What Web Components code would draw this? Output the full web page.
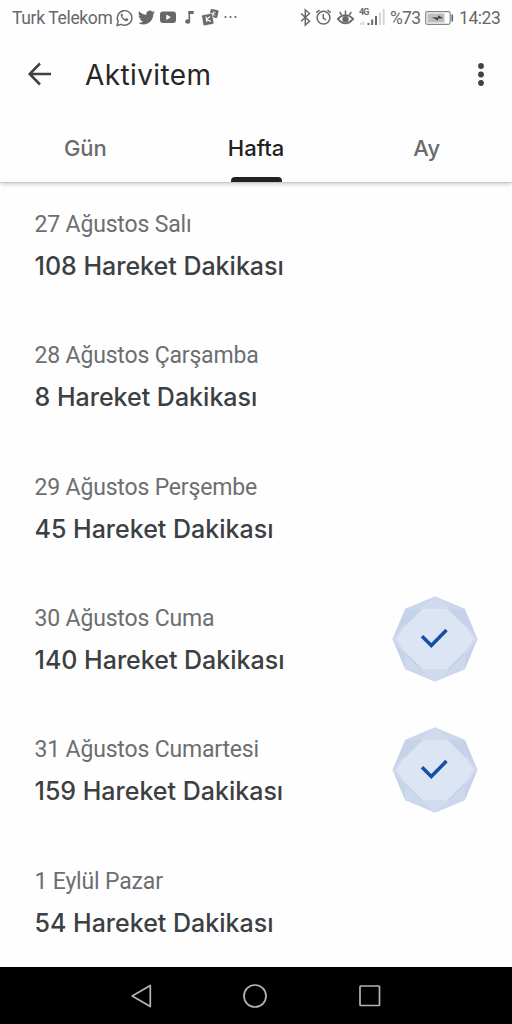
<!DOCTYPE html>
<html lang="tr">
<head>
<meta charset="utf-8">
<title>Aktivitem</title>
<style>
  html, body {
    margin: 0;
    height: 100%;
    overflow: hidden;
    background: #fefefe;
    font-family: Roboto, "Liberation Sans", sans-serif;
  }
</style>
</head>
<body>
<activity-app></activity-app>

<script>
const icons = {
  whatsapp: `<path d="M1 16.500l1.200-4.100A7.300 7.300 0 1 1 5.100 15.300z" fill="none" stroke="currentColor" stroke-width="1.400" stroke-linejoin="round"/><path d="M5.700 4.500c-.9.5-1.200 1.500-.9 2.500.8 2.500 2.600 4.300 5 5.100 1 .3 2.300-.3 2.500-1.500l-.1-.6-1.900-.9-.9 1c-1.500-.6-2.500-1.500-3.200-2.900l.8-.9-.8-1.800z" fill="currentColor"/>`,
  twitter: `<path transform="scale(.7083)" fill="currentColor" d="M23.950 4.570a10 10 0 0 1-2.820.770 4.960 4.960 0 0 0 2.160-2.720c-.95.550-2 .95-3.120 1.180a4.920 4.920 0 0 0-8.380 4.480C7.690 8.100 4.070 6.130 1.640 3.160a4.920 4.920 0 0 0 1.520 6.570 4.900 4.900 0 0 1-2.230-.610v.060c0 2.390 1.700 4.380 3.950 4.830a5 5 0 0 1-2.210.080 4.940 4.940 0 0 0 4.600 3.420A9.870 9.870 0 0 1 0 19.540a13.990 13.990 0 0 0 7.550 2.210c9.050 0 14-7.500 14-13.980v-.640a9.940 9.940 0 0 0 2.400-2.560z"/>`,
  youtube: `<rect x="0" y="2.500" width="16" height="11.500" rx="3" fill="currentColor"/><path d="M6.300 5.500v5.400l4.700-2.700z" fill="#fefefe"/>`,
  note: `<path d="M4.300 2v10" stroke="currentColor" stroke-width="1.600"/><path d="M3.500 2h5.200v3H3.500z" fill="currentColor"/><ellipse cx="2.700" cy="12.500" rx="2.500" ry="2.200" fill="currentColor"/>`,
  cards: `<g fill="currentColor"><rect x="8" y=".5" width="8" height="8" rx="1" transform="rotate(12 12 4.500)"/><rect x=".2" y="5" width="11" height="11" rx="1.500" transform="rotate(-10 6 10)" stroke="#fefefe" stroke-width=".7"/></g><g fill="none" stroke="#fefefe"><path d="M4 7.500l.8 5.500M8 7.500l-3.400 3L9 12.500" stroke-width="1.200"/><path d="M11.300 2.500l-.6 4M13.800 3l-2.800 1.700 2 2" stroke-width=".9"/></g>`,
  dots: `<g fill="currentColor"><circle cx="1.500" cy="8" r="1.100"/><circle cx="6.500" cy="8" r="1.100"/><circle cx="11.500" cy="8" r="1.100"/></g>`,
  bluetooth: `<path d="M1 4.500l8.500 7.800-4.200 3.800V.8l4.200 3.700L1 12.300" fill="none" stroke="currentColor" stroke-width="1.500"/>`,
  alarm: `<g fill="none" stroke="currentColor" stroke-width="1.500"><circle cx="7.500" cy="8.700" r="6.400"/><path d="M7.300 5v4l2.700 2M.3 3.700L3.600 1M14.700 3.700L11.400 1"/></g>`,
  eye: `<g fill="none" stroke="currentColor" stroke-width="1.700"><path d="M.8 9.900Q8.500 2.500 16.200 9.900 8.500 19 .8 9.900z"/><path d="M8.500 1.500v4M2.800 3l1.800 3M14.200 3l-1.800 3" stroke-width="1.500"/></g><circle cx="8.500" cy="10.200" r="3.200" fill="currentColor"/>`,
  signal: `<g fill="#d6d6d6"><path d="M1 13.500h1.500V16H1zM3.500 12.500H5V16H3.500zM20 3.500h2V16h-2zM23.700 0h2v16h-2z"/></g><path d="M8.500 14h2v2h-2zM12.200 10.500h2V16h-2zM16 7h2v9h-2z" fill="currentColor"/>`,
  battery: `<rect x=".7" y="2.700" width="24.500" height="12.600" rx="1.800" fill="none" stroke="#858585" stroke-width="1.200"/><rect x="2.500" y="4.500" width="17" height="9" fill="#bdbdbd"/><path d="M26.400 5.500h1.700v7h-1.700z" fill="currentColor"/><path d="M7 8.300l6 .2V6.300l5.500 2.900-5.500.6v1.900z" fill="#444"/>`,
  back: `<path d="M23 12H2M12 1.500L1.700 12 12 22.500" fill="none" stroke="currentColor" stroke-width="2.500"/>`,
  more: `<g fill="currentColor"><circle cx="4" cy="3" r="2.900"/><circle cx="4" cy="11.500" r="2.900"/><circle cx="4" cy="20" r="2.900"/></g>`,
  navBack: `<path d="M1.200 12L19.300 1.400v21.200z" fill="none" stroke="currentColor" stroke-width="1.700" stroke-linejoin="round"/>`,
  navHome: `<circle cx="12" cy="12" r="11" fill="none" stroke="currentColor" stroke-width="1.700"/>`,
  navRecent: `<rect x="1" y="1" width="19.500" height="19.500" rx=".7" fill="none" stroke="currentColor" stroke-width="1.700"/>`
};

class UiIcon extends HTMLElement {
  constructor() {
    super();
    this.attachShadow({mode: 'open'});
  }

  connectedCallback() {
    const w = this.getAttribute('w');
    const h = this.getAttribute('h') || 17;
    this.shadowRoot.innerHTML = `
      <style>
        :host { display: block; flex: none; }
        svg { display: block; overflow: visible; }
      </style>
      <svg width="${w}" height="${h}" viewBox="0 0 ${w} ${h}">${icons[this.getAttribute('name')]}</svg>
    `;
  }
}
customElements.define('ui-icon', UiIcon);

class StatusBar extends HTMLElement {
  constructor() {
    super();
    this.attachShadow({mode: 'open'}).innerHTML = `
      <style>
        :host {
          display: flex;
          justify-content: space-between;
          align-items: center;
          box-sizing: border-box;
          height: 36px;
          padding: 0 12px 1px;
          color: #686868;
          font-size: 17.500px;
          line-height: 20px;
          white-space: nowrap;
        }
        .group { display: flex; align-items: center; }
        .carrier { width: 104px; letter-spacing: -0.350px; }
        .left { gap: 5px; }
        .left .carrier { margin-right: -5px; }
        .left [name=note] { margin: 0 3px 0 4px; }
        .right { gap: 6px; }
        .network {
          position: relative;
          margin: 0 -1px 0 -1px;
        }
        .network span {
          position: absolute;
          left: 0;
          top: -1px;
          font-size: 9px;
          font-weight: 700;
          line-height: 9px;
          letter-spacing: -0.900px;
        }
        .percent { width: 30px; margin-right: -1px; letter-spacing: -0.700px; }
        .time { width: 41px; letter-spacing: -0.450px; }
      </style>
      <div class="group left">
        <span class="carrier">Turk Telekom</span>
        <ui-icon name="whatsapp" w="17"></ui-icon>
        <ui-icon name="twitter" w="17"></ui-icon>
        <ui-icon name="youtube" w="16"></ui-icon>
        <ui-icon name="note" w="9"></ui-icon>
        <ui-icon name="cards" w="17"></ui-icon>
        <ui-icon name="dots" w="13"></ui-icon>
      </div>
      <div class="group right">
        <ui-icon name="bluetooth" w="10"></ui-icon>
        <ui-icon name="alarm" w="15"></ui-icon>
        <ui-icon name="eye" w="17"></ui-icon>
        <div class="network"><ui-icon name="signal" w="26"></ui-icon><span>4G</span></div>
        <span class="percent">%73</span>
        <ui-icon name="battery" w="28"></ui-icon>
        <span class="time">14:23</span>
      </div>
    `;
  }
}
customElements.define('status-bar', StatusBar);

class AppHeader extends HTMLElement {
  constructor() {
    super();
    this.attachShadow({mode: 'open'}).innerHTML = `
      <style>
        :host {
          display: flex;
          align-items: center;
          box-sizing: border-box;
          height: 78px;
          padding: 0 27px 2px 28px;
          color: #414141;
        }
        h1 {
          flex: 1;
          margin: 2px 0 0 33px;
          color: #262626;
          font: 400 28px/36px Inter, sans-serif;
          letter-spacing: 0.400px;
        }
      </style>
      <ui-icon name="back" w="24" h="24"></ui-icon>
      <h1><slot></slot></h1>
      <ui-icon name="more" w="8" h="23"></ui-icon>
    `;
  }
}
customElements.define('app-header', AppHeader);

class TabItem extends HTMLElement {
  constructor() {
    super();
    this.attachShadow({mode: 'open'}).innerHTML = `
      <style>
        :host {
          display: flex;
          flex: 1;
          flex-direction: column;
          align-items: center;
          justify-content: space-between;
          color: #6b6b6b;
          font: 500 22px/63px Inter, sans-serif;
        }
        :host([active]) { color: #212121; }
        span { padding-top: 2.500px; height: 60.500px; }
        i { width: 51px; height: 5px; }
        :host([active]) i {
          background: #212121;
          border-radius: 4px 4px 0 0;
        }
      </style>
      <span><slot></slot></span><i></i>
    `;
  }
}
customElements.define('tab-item', TabItem);

class TabBar extends HTMLElement {
  constructor() {
    super();
    this.attachShadow({mode: 'open'}).innerHTML = `
      <style>
        :host {
          display: flex;
          height: 68px;
          border-bottom: 1px solid #c8c8c8;
          box-shadow: 0 3px 3px -1px rgba(0, 0, 0, 0.15);
        }
      </style>
      <slot></slot>
    `;
  }
}
customElements.define('tab-bar', TabBar);

class GoalBadge extends HTMLElement {
  constructor() {
    super();
    this.attachShadow({mode: 'open'}).innerHTML = `
      <style>
        :host { display: block; margin-top: -1px; }
        svg { display: block; }
      </style>
      <svg width="86" height="86" viewBox="0 0 86 86">
        <path d="M43 .5L73 13 85.500 43 73 73 43 85.500 13 73 .5 43 13 13z" fill="#c5d2e8"/>
        <path d="M43 .5L73 13H13zM43 85.500L73 73H13z" fill="#cbd7eb"/>
        <path d="M43 .5L58 13H28zM43 85.500L58 73H28zM.5 43L13 28v30zM85.500 43L73 28v30z" fill="#d0dbee"/>
        <path d="M13 58L28 73H13zM73 58L58 73h15z" fill="#cdd9ec"/>
        <path d="M30.500 13h25L73 30.500 82 43 73 55.500 55.500 73h-25L13 55.500 4 43l9-12.500z" fill="#dbe5f4"/>
        <path d="M30 40.200l9.300 9.300L54.500 34" fill="none" stroke="#174ea6" stroke-width="3.500"/>
      </svg>
    `;
  }
}
customElements.define('goal-badge', GoalBadge);

class DayRow extends HTMLElement {
  constructor() {
    super();
    this.attachShadow({mode: 'open'});
  }

  connectedCallback() {
    this.shadowRoot.innerHTML = `
      <style>
        :host {
          display: flex;
          align-items: center;
          justify-content: space-between;
          box-sizing: border-box;
          height: 131.300px;
          padding: 0 34px 7px 34.500px;
          white-space: nowrap;
        }
        .date {
          color: #6c6e70;
          font-size: 23px;
          line-height: 42px;
          letter-spacing: -0.170px;
          padding-top: 1px;
          margin-bottom: -1px;
        }
        .value {
          color: #3c4043;
          font: 500 25px/42px Inter, sans-serif;
        }
      </style>
      <div>
        <div class="date">${this.getAttribute('date')}</div>
        <div class="value">${this.getAttribute('minutes')} Hareket Dakikası</div>
      </div>
      ${this.hasAttribute('done') ? '<goal-badge></goal-badge>' : ''}
    `;
  }
}
customElements.define('day-row', DayRow);

class NavBar extends HTMLElement {
  constructor() {
    super();
    this.attachShadow({mode: 'open'}).innerHTML = `
      <style>
        :host {
          display: flex;
          align-items: center;
          justify-content: center;
          gap: 92px;
          box-sizing: border-box;
          height: 57px;
          padding-right: 1px;
          background: #000;
          color: #b5b5b5;
        }
      </style>
      <ui-icon name="navBack" w="20" h="24"></ui-icon>
      <ui-icon name="navHome" w="24" h="24"></ui-icon>
      <ui-icon name="navRecent" w="21" h="21"></ui-icon>
    `;
  }
}
customElements.define('nav-bar', NavBar);

class ActivityApp extends HTMLElement {
  constructor() {
    super();
    this.attachShadow({mode: 'open'}).innerHTML = `
      <style>
        :host {
          display: flex;
          flex-direction: column;
          height: 100vh;
        }
        status-bar, app-header, tab-bar, nav-bar { flex: none; }
        main { flex: 1; min-height: 0; }
        nav-bar { z-index: 1; }
      </style>
      <status-bar></status-bar>
      <app-header>Aktivitem</app-header>
      <tab-bar>
        <tab-item>Gün</tab-item>
        <tab-item active>Hafta</tab-item>
        <tab-item>Ay</tab-item>
      </tab-bar>
      <main>
        <day-row date="27 Ağustos Salı" minutes="108"></day-row>
        <day-row date="28 Ağustos Çarşamba" minutes="8"></day-row>
        <day-row date="29 Ağustos Perşembe" minutes="45"></day-row>
        <day-row date="30 Ağustos Cuma" minutes="140" done></day-row>
        <day-row date="31 Ağustos Cumartesi" minutes="159" done></day-row>
        <day-row date="1 Eylül Pazar" minutes="54"></day-row>
      </main>
      <nav-bar></nav-bar>
    `;
  }
}
customElements.define('activity-app', ActivityApp);
</script>
</body>
</html>
